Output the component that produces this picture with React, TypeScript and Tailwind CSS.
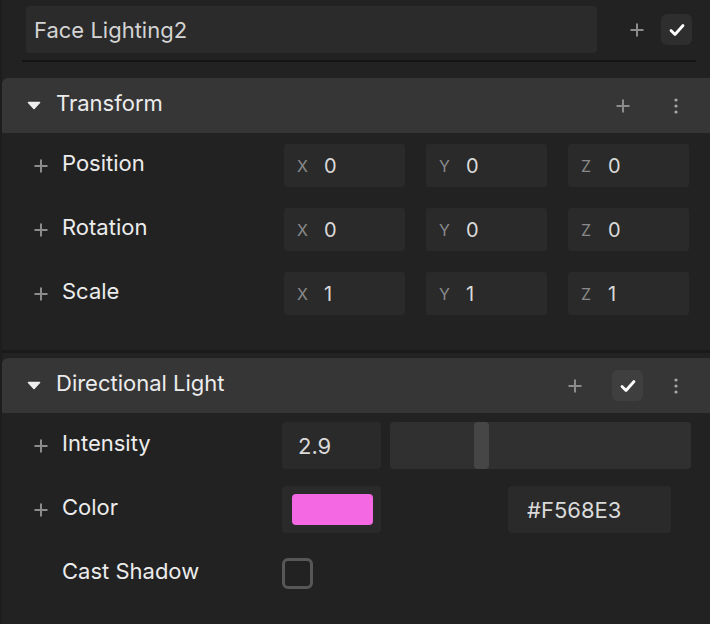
import React from "react";

const Plus = ({ className = "" }: { className?: string }) => (
  <svg width="14" height="14" viewBox="0 0 14 14" className={className}>
    <path d="M7 0.5V13.5M0.5 7H13.5" stroke="currentColor" strokeWidth="2" />
  </svg>
);

const Check = () => (
  <svg width="16" height="14" viewBox="0 0 16 14">
    <path d="M2 7.5L6 11.5L14 2.5" stroke="white" strokeWidth="2.8" fill="none" strokeLinecap="round" strokeLinejoin="round" />
  </svg>
);

const Dots = () => (
  <svg width="4" height="16" viewBox="0 0 4 16">
    <circle cx="2" cy="2" r="1.6" fill="#a8a8a8" />
    <circle cx="2" cy="8" r="1.6" fill="#a8a8a8" />
    <circle cx="2" cy="14" r="1.6" fill="#a8a8a8" />
  </svg>
);

const Tri = () => (
  <svg width="14" height="9" viewBox="0 0 14 9">
    <path d="M1.5 1.5H12.5L7 7.5Z" fill="#eeeeee" stroke="#eeeeee" strokeWidth="1.6" strokeLinejoin="round" />
  </svg>
);

const Header = ({ title, check }: { title: string; check?: boolean }) => (
  <div className="h-[55px] bg-[#363636] rounded-tl-[6px] flex items-center pl-[25px]">
    <Tri />
    <span className="ml-[15px] text-[22px] text-[#ececec] leading-none -mt-[5px]">{title}</span>
    <div className="ml-auto flex items-center">
      {check ? (
        <>
          <Plus className="text-[#8c8c8c]" />
          <div className="ml-[30px] w-[31px] h-[31px] rounded-[6px] bg-[#3f3f3f] flex items-center justify-center">
            <Check />
          </div>
          <div className="ml-[31px] mr-[32px]">
            <Dots />
          </div>
        </>
      ) : (
        <>
          <Plus className="text-[#8c8c8c]" />
          <div className="ml-[44px] mr-[32px]">
            <Dots />
          </div>
        </>
      )}
    </div>
  </div>
);

const Vec = ({ axis, value }: { axis: string; value: string }) => (
  <div className="w-[121px] h-[43px] bg-[#2a2a2a] rounded-[3px] flex items-center pl-[13px]">
    <span className="text-[16px] text-[#8a8a8a] w-[15px] leading-none">{axis}</span>
    <span className="ml-[12px] text-[20px] text-[#dadada] leading-none">{value}</span>
  </div>
);

const Label = ({ text, plus = true, w = 250 }: { text: string; plus?: boolean; w?: number }) => (
  <div className={`flex items-center ${w === 250 ? "w-[250px]" : "w-[248px]"}`}>
    <div className="w-[14px]">{plus && <Plus className="text-[#8c8c8c]" />}</div>
    <span className="ml-[14px] text-[22px] text-[#ececec] leading-none -mt-[5px]">{text}</span>
  </div>
);

const VecRow = ({ label, v }: { label: string; v: string }) => (
  <div className="flex items-center pl-[32px]">
    <Label text={label} />
    <div className="flex gap-[21px]">
      <Vec axis="X" value={v} />
      <Vec axis="Y" value={v} />
      <Vec axis="Z" value={v} />
    </div>
  </div>
);

export default function App() {
  return (
    <div
      className="w-[710px] h-[624px] overflow-hidden bg-[#1d1d1d] pl-[2px]"
      style={{ fontFamily: "Inter, 'Noto Sans', sans-serif" }}
    >
      <div className="h-full bg-[#222222]">
        {/* name row */}
        <div className="pt-[6px] pl-[24px] flex items-center">
          <div className="w-[571px] h-[47px] bg-[#2b2b2b] rounded-[4px] flex items-center pl-[8px]">
            <span className="text-[22px] text-[#d4d4d4] leading-none">Face Lighting2</span>
          </div>
          <Plus className="ml-[33px] text-[#8c8c8c]" />
          <div className="ml-[17px] w-[31px] h-[31px] rounded-[6px] bg-[#2e2e2e] flex items-center justify-center">
            <Check />
          </div>
        </div>
        <div className="mt-[7px] ml-[20px] w-[674px] h-[2px] bg-[#141414]" />
        <div className="h-[16px]" />

        {/* Transform */}
        <Header title="Transform" />
        <div className="pt-[11px] pb-[35px] flex flex-col gap-[21px] border-b-[3px] border-[#1a1a1a]">
          <VecRow label="Position" v="0" />
          <VecRow label="Rotation" v="0" />
          <VecRow label="Scale" v="1" />
        </div>
        <div className="h-[5px]" />

        {/* Directional Light */}
        <Header title="Directional Light" check />
        <div className="pt-[9px] flex flex-col">
          <div className="flex items-center pl-[32px]">
            <Label text="Intensity" w={248} />
            <div className="w-[99px] h-[47px] bg-[#2a2a2a] rounded-[4px] flex items-center pl-[16px]">
              <span className="text-[22px] text-[#dadada] leading-none">2.9</span>
            </div>
            <div className="ml-[9px] w-[301px] h-[47px] bg-[#303030] rounded-[4px] relative">
              <div className="absolute left-[84px] top-0 w-[15px] h-[47px] rounded-[4px] bg-[#464646]" />
            </div>
          </div>
          <div className="mt-[17px] flex items-center pl-[32px]">
            <Label text="Color" w={248} />
            <div className="w-[99px] h-[47px] bg-[#2a2a2a] rounded-[4px] flex items-center pl-[10px]">
              <div className="w-[81px] h-[31px] rounded-[4px] bg-[#F568E3]" />
            </div>
            <div className="ml-[127px] w-[163px] h-[47px] bg-[#2a2a2a] rounded-[4px] flex items-center pl-[19px]">
              <span className="text-[22px] text-[#dadada] leading-none">#F568E3</span>
            </div>
          </div>
          <div className="mt-[25px] flex items-center pl-[32px]">
            <Label text="Cast Shadow" plus={false} w={248} />
            <div className="w-[31px] h-[31px] rounded-[6px] border-[3px] border-[#575757]" />
          </div>
        </div>
      </div>
    </div>
  );
}
